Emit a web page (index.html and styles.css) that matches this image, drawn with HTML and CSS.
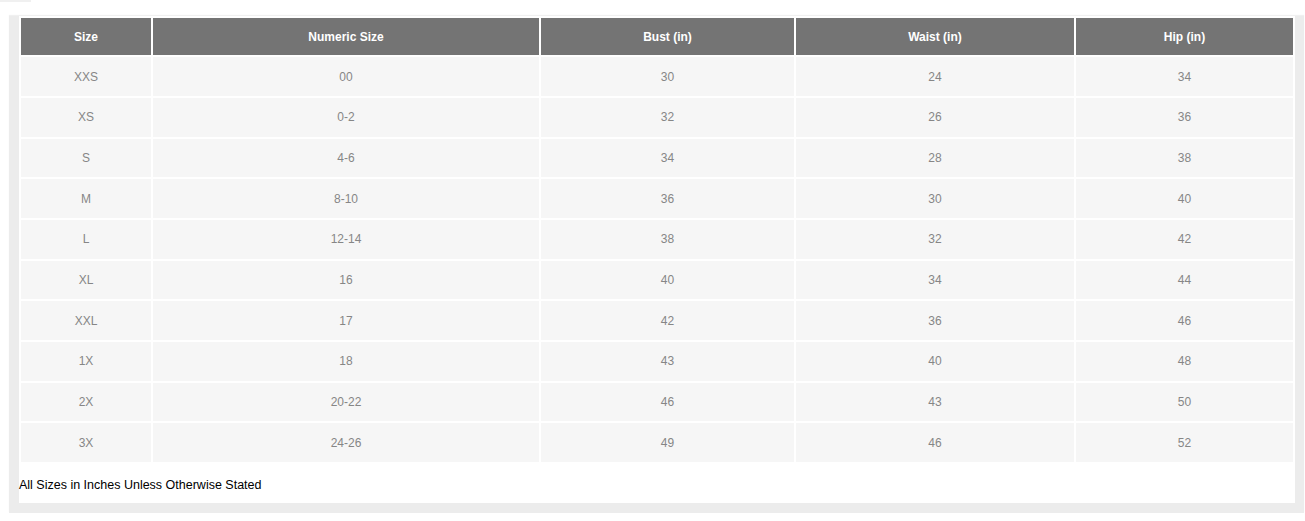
FILE: index.html
```html
<!DOCTYPE html>
<html lang="en">
<head>
<meta charset="utf-8">
<title>Size Chart</title>
<link rel="stylesheet" href="styles.css">
</head>
<body>
<div class="tab"></div>
<div class="frame">
  <div class="panel">
    <table class="chart">
      <colgroup>
        <col class="c1"><col class="c2"><col class="c3"><col class="c4"><col class="c5">
      </colgroup>
      <thead>
        <tr><th>Size</th><th>Numeric Size</th><th>Bust (in)</th><th>Waist (in)</th><th>Hip (in)</th></tr>
      </thead>
      <tbody>
        <tr><td>XXS</td><td>00</td><td>30</td><td>24</td><td>34</td></tr>
        <tr><td>XS</td><td>0-2</td><td>32</td><td>26</td><td>36</td></tr>
        <tr><td>S</td><td>4-6</td><td>34</td><td>28</td><td>38</td></tr>
        <tr><td>M</td><td>8-10</td><td>36</td><td>30</td><td>40</td></tr>
        <tr><td>L</td><td>12-14</td><td>38</td><td>32</td><td>42</td></tr>
        <tr><td>XL</td><td>16</td><td>40</td><td>34</td><td>44</td></tr>
        <tr><td>XXL</td><td>17</td><td>42</td><td>36</td><td>46</td></tr>
        <tr><td>1X</td><td>18</td><td>43</td><td>40</td><td>48</td></tr>
        <tr><td>2X</td><td>20-22</td><td>46</td><td>43</td><td>50</td></tr>
        <tr><td>3X</td><td>24-26</td><td>49</td><td>46</td><td>52</td></tr>
      </tbody>
    </table>
    <p class="note">All Sizes in Inches Unless Otherwise Stated</p>
  </div>
</div>
</body>
</html>
```
FILE: styles.css
```css
html, body {
  margin: 0;
  padding: 0;
  background: #ffffff;
}

body {
  font-family: "Liberation Sans", Arial, sans-serif;
}

.tab {
  width: 31px;
  height: 2px;
  background: #f0f0f0;
}

.frame {
  margin: 14px 1px 0 9px;
  padding: 0 9px 10px 10px;
  background: #ececec;
  box-shadow: 0 -1px 1px rgba(0, 0, 0, 0.06);
}

.panel {
  background: #ffffff;
}

.chart {
  width: 100%;
  border-collapse: separate;
  border-spacing: 2px;
  table-layout: fixed;
}

.c1 { width: 130px; }
.c2 { width: 386px; }
.c3 { width: 253px; }
.c4 { width: 278px; }
.c5 { width: 217px; }

.chart th {
  height: 37.3px;
  padding: 0;
  background: #747474;
  color: #ffffff;
  font-size: 12px;
  font-weight: bold;
  text-align: center;
  vertical-align: middle;
}

.chart td {
  height: 38.7px;
  padding: 0;
  background: #f6f6f6;
  color: #868686;
  font-size: 12px;
  text-align: center;
  vertical-align: middle;
}

.note {
  margin: 0;
  padding: 14px 0 11px 0;
  font-size: 12.5px;
  line-height: 14px;
  color: #000000;
}
```
